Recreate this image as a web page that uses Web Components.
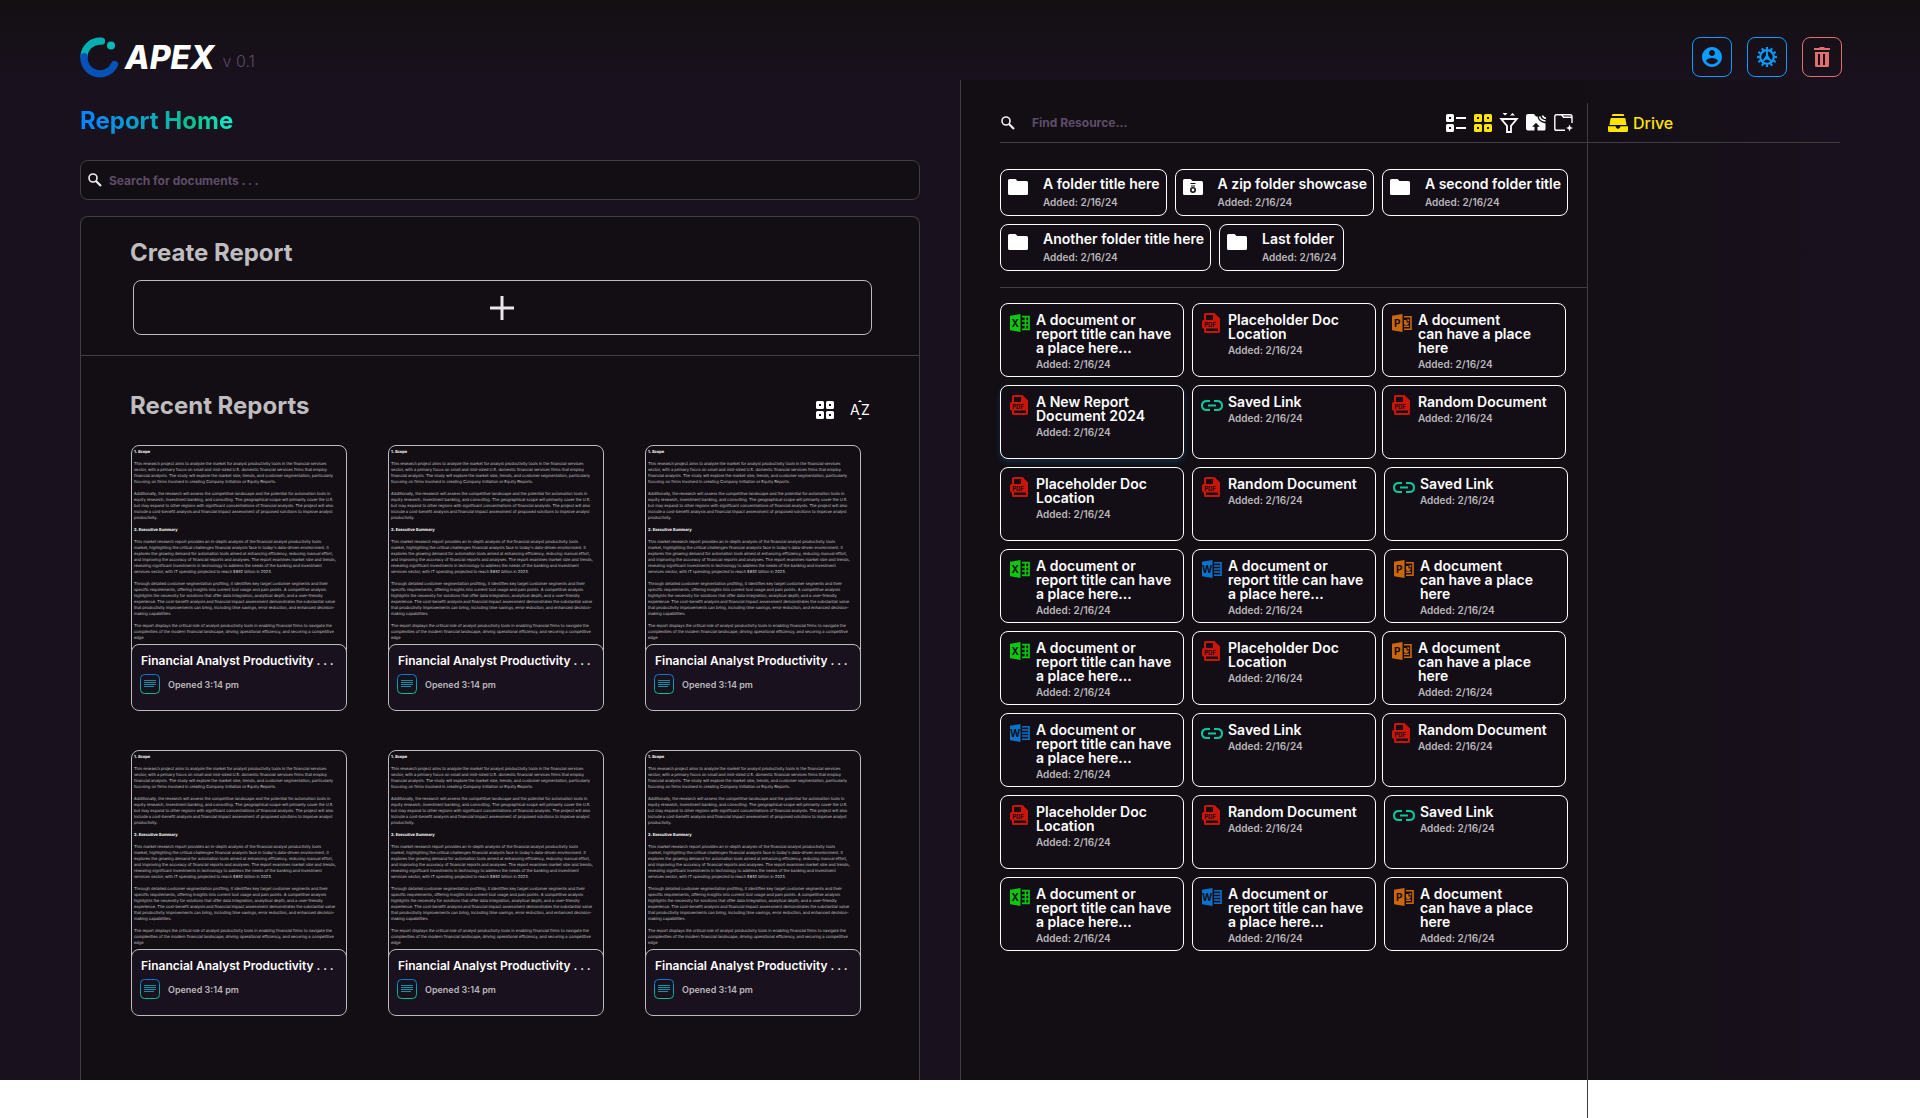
<!DOCTYPE html>
<html lang="en">
<head>
<meta charset="utf-8">
<title>Apex – Report Home</title>
<style>
  body { margin: 0; background: #fff; font-family: Inter, "Liberation Sans", sans-serif; }
</style>
</head>
<body>
<apex-app></apex-app>

<script>
const define = (name, css, html) => {
  customElements.define(name, class extends HTMLElement {
    connectedCallback() {
      if (this.shadowRoot) return;
      const root = this.attachShadow({ mode: 'open' });
      root.innerHTML = `<style>*{box-sizing:border-box}h1,h2,h3,p{margin:0}${css}</style>` +
        (typeof html === 'function' ? html(this) : html);
    }
  });
};

const tile = (x, y) => `<path fill-rule="evenodd" d="M${x + 1.5} ${y}h5q1.500 0 1.500 1.500v5q0 1.500-1.500 1.500h-5q-1.500 0-1.500-1.500v-5q0-1.500 1.500-1.500zM${x + 3} ${y + 3}v2h2v-2z"/>`;
const door = '<path d="M0 1.800 10.500 0v18L0 16.200z"/>';
const letter = (c) => `<text x="5.200" y="12.700" font-size="10" font-weight="700" text-anchor="middle" fill="#130e16">${c}</text>`;
const pdf = '<path d="M3 7V1.500Q3 1 3.500 1h8.500l5 5v12.500q0 .5-.5.5H3.500Q3 19 3 18.500V15" fill="none" stroke="currentColor" stroke-width="2"/><path d="M11 1h2l5 5v1h-7zM0 8.500Q0 7 1.500 7H18v8.500H1.500Q0 15.500 0 14z"/><text x="8" y="13.600" font-size="6" font-weight="700" text-anchor="middle" fill="#130e16">PDF</text>';

/* name: [width, height, markup] */
const ICONS = {
  logo: [40, 40, '<path d="M21.500 4.200A16 16 0 0 0 4 19" fill="none" stroke="#06b0b2" stroke-width="7.200" stroke-linecap="round"/><path d="M4 19.500A16 16 0 0 0 34.500 27.500" fill="none" stroke="#0552b8" stroke-width="7.200" stroke-linecap="round"/><circle cx="31" cy="8.500" r="4" fill="#06bcb8"/>'],
  user: [20, 20, '<g transform="translate(-2 -2)"><path d="M12 2C6.480 2 2 6.480 2 12s4.480 10 10 10 10-4.480 10-10S17.520 2 12 2zm0 3c1.660 0 3 1.340 3 3s-1.340 3-3 3-3-1.340-3-3 1.340-3 3-3zm0 14.200c-2.500 0-4.710-1.280-6-3.220.03-1.990 4-3.080 6-3.080 1.990 0 5.970 1.090 6 3.080-1.290 1.940-3.500 3.220-6 3.220z"/></g>'],
  gear: [20, 20, '<g fill="none" stroke="currentColor"><circle cx="10" cy="10" r="6.800" stroke-width="2.200"/><circle cx="10" cy="10" r="8.800" stroke-width="2.400" pathLength="120" stroke-dasharray="4.600 5.400" stroke-dashoffset="2.300"/><path d="M10 3v6M10 11l-5 3.200M10 11l5 3.200" stroke-width="1.800"/></g><path d="M10 6.500 13.500 12.500h-7z"/>'],
  trash: [16, 20, '<path fill-rule="evenodd" d="M6 0h4l1 1h5v2H0V1h5zM1 5h14v13.500q0 1.500-1.500 1.500h-11Q1 20 1 18.500zM4 7v11h2V7zm5 0v11h2V7z"/>'],
  search: [14, 14, '<circle cx="5" cy="5" r="4" fill="none" stroke="currentColor" stroke-width="1.600"/><path d="M8 8l5 5" stroke="currentColor" stroke-width="2.200"/>'],
  plus: [24, 24, '<path d="M12 0v24M0 12h24" stroke="currentColor" stroke-width="3"/>'],
  grid: [18, 18, tile(0, 0) + tile(10, 0) + tile(0, 10) + tile(10, 10)],
  list: [20, 18, tile(0, 0) + tile(0, 10) + '<path d="M10 4h10M10 14h10" stroke="currentColor" stroke-width="2"/>'],
  sort: [20, 20, '<text x="0" y="15" font-size="14">A</text><text x="11" y="15" font-size="14">Z</text><path d="M10 0l2.200 2H7.800zM10 20l2.200-2H7.800z"/>'],
  filter: [18, 20, '<path d="M1.200 6h15.600L11 12.800V19H7V12.800z" fill="none" stroke="currentColor" stroke-width="1.800"/><path d="M2.500 0H7.500L5 2.500zM10 2.500h5L12.500 0z"/>'],
  upload: [20, 17, '<path d="M0 2q0-2 2-2h6l2 2.500h1.500Q12 8 19.500 9.500V15q0 1.500-1.500 1.500h-6.500v-3.800h2.300L10 8.800 6.200 12.700h2.300v3.800H2q-2 0-2-2z"/><path d="M13.500 2.500Q14.500 6.500 19.500 7M16.500 1.500Q17 4 20 4.300" fill="none" stroke="currentColor" stroke-width="1.500"/>'],
  newfolder: [19, 18, '<path d="M11 16.300H2.300Q.8 16.300.8 14.800V2.300Q.8.8 2.300.8H7.500L9.500 3.300h7q1.500 0 1.500 1.500V9M7.500.8h8.500q2 0 2 2v2" fill="none" stroke="currentColor" stroke-width="1.400"/><path d="M15.500 10.500l1 2.500 2.500 1-2.500 1-1 2.500-1-2.500-2.500-1 2.500-1z"/>'],
  drive: [20, 18, '<path d="M4.500 0h11l.8 2H3.700zM3.500 4h13q.8 0 1 .8L18.500 11h-17l1-6.200q.2-.8 1-.8zM0 12.300h7.500Q8 15 10 15t2.500-2.700H20v4.200q0 1.500-1.500 1.500h-17Q0 18 0 16.500z"/>'],
  folder: [20, 16, '<path d="M0 1.500Q0 0 1.500 0H7.500l2 2h9Q20 2 20 3.500v11q0 1.500-1.500 1.500h-17Q0 16 0 14.500z"/>'],
  zip: [20, 16, '<path d="M0 1.500Q0 0 1.500 0H7.500l2 2h9Q20 2 20 3.500v11q0 1.500-1.500 1.500h-17Q0 16 0 14.500z"/><path d="M7.500 4.500h5M8 7h4" stroke="#130e16" stroke-width="1.200"/><circle cx="10" cy="11" r="2.200" fill="#fff" stroke="#130e16" stroke-width="1.600"/>'],
  excel: [20, 18, `<g fill="#0cc70c">${door}<path d="M12 2.700h7v12.600h-7M12 7h7M12 11h7M15.500 3v12" fill="none" stroke="#0cc70c" stroke-width="1.700"/></g>${letter('X')}`],
  word: [20, 18, `<g fill="#0a73cc">${door}<path d="M12 2.700h7v12.600h-7M12 6h6M12 9h6M12 12h6" fill="none" stroke="#0a73cc" stroke-width="1.600"/></g>${letter('W')}`],
  power: [20, 18, `<g fill="#cc660a">${door}<path d="M12 2.700h7v12.600h-7M12 12.300h5" fill="none" stroke="#cc660a" stroke-width="1.600"/><path d="M12 6h2.500v2.500H17A2.800 2.800 0 0 1 12 10zM15.500 4.700q2 .3 2 2.500h-2z"/></g>${letter('P')}`],
  pdf: [18, 20, `<g color="#cc1408" fill="#cc1408">${pdf}</g>`],
  link: [22, 12, '<g fill="none" stroke="#0cc79c" stroke-width="2"><path d="M9 2H6Q1 2 1 6.500T6 11H9M13 2h3q5 0 5 4.500T16 11H13M7 6.500h8"/></g>'],
  note: [20, 20, '<defs><linearGradient id="n" x1="0" y1="0" x2="0" y2="1"><stop offset="0" stop-color="#0a78d8"/><stop offset="1" stop-color="#0cc08c"/></linearGradient></defs><rect x=".5" y=".5" width="19" height="19" rx="4" fill="none" stroke="url(#n)"/><path d="M4 6.500h12M4 8.500h12M4 10.500h12M4 12.500h10" stroke="#1590a8" stroke-width="1"/>']
};

customElements.define('ui-icon', class extends HTMLElement {
  connectedCallback() {
    if (this.shadowRoot) return;
    const [w, h, body] = ICONS[this.getAttribute('name')];
    this.attachShadow({ mode: 'open' }).innerHTML =
      `<style>:host{display:block;flex:none}svg{display:block;overflow:visible}</style>` +
      `<svg width="${w}" height="${h}" viewBox="0 0 ${w} ${h}" fill="currentColor" aria-hidden="true">${body}</svg>`;
  }
});

define('action-button', `
  :host { display: block; color: #0a9dff; }
  :host([tone="danger"]) { color: #e07070; }
  button { width: 40px; height: 40px; padding: 0; display: grid; place-items: center; color: inherit;
    background: transparent; border: 1px solid currentColor; border-radius: 8px; }
`, el => `<button aria-label="${el.getAttribute('label')}"><slot></slot></button>`);

define('tool-button', `
  :host { display: block; }
  button { display: block; padding: 0; border: 0; background: none; color: inherit; font-family: inherit; }
`, el => `<button aria-label="${el.getAttribute('label')}"><slot></slot></button>`);

define('app-header', `
  :host { display: flex; align-items: flex-end; justify-content: space-between; height: 80px; padding: 0 78px 3px 80px; }
  .brand, nav { display: flex; align-items: center; }
  .name { margin-left: 5px; padding-top: 2px; color: #fff; font-size: 32px; line-height: 38px; font-weight: 800; font-style: italic; }
  .version { margin: 8px 0 0 8px; color: #5a4864; font-size: 16px; line-height: 20px; font-weight: 300; }
  nav { gap: 15px; }
`, `
  <div class="brand"><ui-icon name="logo"></ui-icon><span class="name">APEX</span><span class="version">v 0.1</span></div>
  <nav>
    <action-button label="Account"><ui-icon name="user"></ui-icon></action-button>
    <action-button label="Settings"><ui-icon name="gear"></ui-icon></action-button>
    <action-button label="Trash" tone="danger"><ui-icon name="trash"></ui-icon></action-button>
  </nav>
`);

define('search-field', `
  :host { display: block; }
  label { display: flex; align-items: center; height: 40px; gap: 17px; padding-left: 1px; color: #f0f0f0; }
  :host([boxed]) label { gap: 7px; padding: 0 7px; background: #120e13; border: 1px solid #3f3d3f; border-radius: 8px; }
  input { flex: 1; min-width: 0; padding: 1px 0 0; border: 0; outline: 0; background: none; color: #fff; font: 700 12px/16px Inter, sans-serif; }
  input::placeholder { color: #5f4c6a; opacity: 1; }
`, el => `<label><ui-icon name="search"></ui-icon><input type="text" aria-label="Search" placeholder="${el.getAttribute('placeholder')}"></label>`);

const PREVIEW = `<b>1. Scope</b>

This research project aims to analyze the market for analyst productivity tools in the financial services
sector, with a primary focus on small and mid-sized U.S. domestic financial services firms that employ
financial analysts. The study will explore the market size, trends, and customer segmentation, particularly
focusing on firms involved in creating Company Initiation or Equity Reports.

Additionally, the research will assess the competitive landscape and the potential for automation tools in
equity research, investment banking, and consulting. The geographical scope will primarily cover the U.S.
but may expand to other regions with significant concentrations of financial analysts. The project will also
include a cost-benefit analysis and financial impact assessment of proposed solutions to improve analyst
productivity.

<b>2. Executive Summary</b>

This market research report provides an in-depth analysis of the financial analyst productivity tools
market, highlighting the critical challenges financial analysts face in today's data-driven environment. It
explores the growing demand for automation tools aimed at enhancing efficiency, reducing manual effort,
and improving the accuracy of financial reports and analyses. The report examines market size and trends,
revealing significant investments in technology to address the needs of the banking and investment
services sector, with IT spending projected to reach $652 billion in 2023.

Through detailed customer segmentation profiling, it identifies key target customer segments and their
specific requirements, offering insights into current tool usage and pain points. A competitive analysis
highlights the necessity for solutions that offer data integration, analytical depth, and a user-friendly
experience. The cost-benefit analysis and financial impact assessment demonstrates the substantial value
that productivity improvements can bring, including time savings, error reduction, and enhanced decision-
making capabilities.

The report displays the critical role of analyst productivity tools in enabling financial firms to navigate the
complexities of the modern financial landscape, driving operational efficiency, and securing a competitive
edge`;

define('report-card', `
  :host { display: block; }
  article { display: flex; flex-direction: column; height: 266px; overflow: hidden; border: 1px solid #bcbabd; border-radius: 8px; background: #120e13; }
  .preview { flex: 1; min-height: 0; padding: 3px 0 0 2px; overflow: hidden; color: #c9c7ca; white-space: pre; font-size: 4px; line-height: 6px; text-rendering: geometricPrecision; }
  .preview b { font-weight: 700; color: #fff; }
  footer { flex: none; height: 67px; margin: 0 -1px -1px; padding: 7px 8px; background: #19111d; border: 1px solid #bcbabd; border-radius: 8px; }
  h3 { padding-left: 1px; font-size: 12px; line-height: 18px; font-weight: 600; color: #fff; white-space: nowrap; }
  .meta { display: flex; align-items: center; gap: 8px; margin-top: 4px; color: #b9b7bb; font-size: 9px; font-weight: 600; }
`, `
  <article>
    <div class="preview">${PREVIEW}</div>
    <footer><h3>Financial Analyst Productivity . . .</h3><div class="meta"><ui-icon name="note"></ui-icon><span>Opened 3:14 pm</span></div></footer>
  </article>
`);

define('reports-pane', `
  :host { display: flex; flex-direction: column; padding: 0 40px 0 80px; min-width: 0; }
  h1 { align-self: flex-start; padding-top: 2px; font-size: 24px; line-height: 78px; font-weight: 700; color: transparent;
    background: linear-gradient(90deg, #0a84ff 5%, #0aa8c0 45%, #0cc48c 75%, #12ecd0); -webkit-background-clip: text; background-clip: text; }
  .panel { flex: 1; margin-top: 16px; border: 1px solid #3f3d3f; border-bottom: 0; border-radius: 8px 8px 0 0; background: #120e13; }
  h2 { color: #bebcbf; font-size: 24px; line-height: 30px; font-weight: 700; }
  .create { height: 139px; padding: 21px 50px 0 49px; border-bottom: 1px solid #3f3d3f; }
  .create button { display: flex; align-items: center; justify-content: center; width: calc(100% - 3px); height: 55px; margin: 12px 0 0 3px; padding: 1px 2px 0 0;
    background: transparent; border: 1px solid #bcbabd; border-radius: 8px; color: #e8e8ee; }
  .create { padding-right: 47px; }
  .bar { display: flex; align-items: center; justify-content: space-between; padding: 35px 49px 0; }
  .tools { display: flex; align-items: center; gap: 16px; color: #fff; padding-top: 8px; }
  .cards { display: grid; grid-template-columns: repeat(3, 216px); justify-content: space-between; row-gap: 39px; padding: 24px 58px 0 50px; }
`, `
  <h1>Report Home</h1>
  <search-field boxed placeholder="Search for documents . . ."></search-field>
  <section class="panel">
    <div class="create"><h2>Create Report</h2><button aria-label="Create report"><ui-icon name="plus"></ui-icon></button></div>
    <div class="bar"><h2>Recent Reports</h2>
      <div class="tools"><tool-button label="Grid view"><ui-icon name="grid"></ui-icon></tool-button><tool-button label="Sort"><ui-icon name="sort"></ui-icon></tool-button></div>
    </div>
    <div class="cards">${'<report-card></report-card>'.repeat(6)}</div>
  </section>
`);

define('folder-card', `
  :host { display: block; }
  a { display: flex; gap: 15px; height: 47px; padding: 5px 6px 0 7px; color: #fff; text-decoration: none; border: 1px solid #fff; border-radius: 8px; background: #130e16; }
  ui-icon { margin-top: 4px; }
  h3 { font-size: 14px; line-height: 18px; font-weight: 600; white-space: nowrap; }
  p { color: #b9b7bb; font-size: 10px; line-height: 18px; font-weight: 600; }
`, el => `<a href="#"><ui-icon name="${el.getAttribute('icon') || 'folder'}"></ui-icon><div><h3><slot></slot></h3><p>Added: 2/16/24</p></div></a>`);

define('doc-card', `
  :host { display: block; }
  a { display: grid; grid-template-columns: 27px 1fr; height: 74px; padding: 9px 0 0 8px; color: #fff; text-decoration: none; border: 1px solid #fff; border-radius: 8px; background: #130e16; }
  :host([active]) a { box-shadow: 0 3px 6px rgba(20, 130, 220, .25); }
  .icon { padding: 1px 0 0 1px; }
  .icon.pdf { padding-top: 0; }
  .icon.link { padding: 4px 0 0; }
  h3 { font-size: 14px; line-height: 14px; font-weight: 600; white-space: nowrap; }
  p { margin-top: 2px; color: #b9b7bb; font-size: 10px; line-height: 14px; font-weight: 600; }
`, el => {
  const icon = el.getAttribute('icon');
  return `<a href="#"><div class="icon ${icon}"><ui-icon name="${icon}"></ui-icon></div><div><h3><slot></slot></h3><p>Added: 2/16/24</p></div></a>`;
});

const LONG = 'A document or<br>report title can have<br>a place here...';
const SHORT = 'A document<br>can have a place<br>here';
const PLACE = 'Placeholder Doc<br>Location';
const DOC_GROUPS = [
  ['tight', [['excel', LONG], ['pdf', PLACE], ['power', SHORT], ['pdf', 'A New Report<br>Document 2024', 'active'], ['link', 'Saved Link'], ['pdf', 'Random Document']]],
  ['', [['pdf', PLACE], ['pdf', 'Random Document'], ['link', 'Saved Link'], ['excel', LONG], ['word', LONG], ['power', SHORT]]],
  ['tight', [['excel', LONG], ['pdf', PLACE], ['power', SHORT], ['word', LONG], ['link', 'Saved Link'], ['pdf', 'Random Document']]],
  ['', [['pdf', PLACE], ['pdf', 'Random Document'], ['link', 'Saved Link'], ['excel', LONG], ['word', LONG], ['power', SHORT]]]
];

define('resources-pane', `
  :host { display: block; box-sizing: border-box; }
  .find { display: flex; align-items: center; height: 40px; border-bottom: 1px solid #3f3d3f; padding-right: 14px; }
  search-field { flex: 1; }
  .tools { display: flex; align-items: center; gap: 8px; color: #fff; }
  .tools .on { color: #ffe500; }
  .folders { display: flex; flex-wrap: wrap; gap: 8px; padding: 26px 10px 16px 0; border-bottom: 1px solid #3f3d3f; }
  .docs { display: grid; gap: 8px; padding-top: 15px; }
  .group { display: grid; grid-template-columns: 184px 184px 184px; gap: 8px; }
  .group.tight { grid-template-columns: 184px 182px 184px; }
  .group > :nth-child(3n+2) { width: 184px; }
`, `
  <div class="find">
    <search-field placeholder="Find Resource..."></search-field>
    <div class="tools">
      <tool-button label="List view"><ui-icon name="list"></ui-icon></tool-button>
      <tool-button class="on" label="Grid view"><ui-icon name="grid"></ui-icon></tool-button>
      <tool-button label="Filter"><ui-icon name="filter"></ui-icon></tool-button>
      <tool-button label="Upload"><ui-icon name="upload"></ui-icon></tool-button>
      <tool-button label="New folder"><ui-icon name="newfolder"></ui-icon></tool-button>
    </div>
  </div>
  <div class="folders">
    <folder-card>A folder title here</folder-card>
    <folder-card icon="zip">A zip folder showcase</folder-card>
    <folder-card>A second folder title</folder-card>
    <folder-card>Another folder title here</folder-card>
    <folder-card>Last folder</folder-card>
  </div>
  <div class="docs">${DOC_GROUPS.map(([kind, docs]) =>
    `<div class="group ${kind}">${docs.map(([icon, title, flag = '']) => `<doc-card icon="${icon}" ${flag}>${title}</doc-card>`).join('')}</div>`).join('')}</div>
`);

define('drive-pane', `
  :host { display: block; }
  div { display: flex; align-items: center; height: 40px; padding-left: 20px; border-bottom: 1px solid #3f3d3f; }
  a { display: flex; align-items: center; gap: 5px; color: #ffe500; font-size: 16px; line-height: 20px; font-weight: 500; text-decoration: none; }
`, `<div><a href="#"><ui-icon name="drive"></ui-icon>Drive</a></div>`);

define('apex-app', `
  :host { --below: 38px; display: flex; flex-direction: column; min-height: 100vh;
    background: linear-gradient(#130f13, #19111d 80px) 0 0 / 100% calc(100% - var(--below)) no-repeat; }
  main { flex: 1; display: grid; grid-template-columns: 1fr 1fr; }
  reports-pane { margin-bottom: var(--below); }
  .side { display: flex; padding-right: 80px;
    background: linear-gradient(#3f3d3f, #3f3d3f) 0 0 / 1px calc(100% - var(--below)) no-repeat,
      linear-gradient(90deg, #120e13 60%, #19111d 90%) 0 0 / 100% calc(100% - var(--below)) no-repeat; }
  resources-pane { width: 628px; flex: none; margin-top: 23px; padding-left: 40px; border-right: 1px solid #3f3d3f; }
  drive-pane { flex: 1; margin-top: 23px; }
`, `
  <app-header></app-header>
  <main>
    <reports-pane></reports-pane>
    <div class="side"><resources-pane></resources-pane><drive-pane></drive-pane></div>
  </main>
`);
</script>
</body>
</html>
